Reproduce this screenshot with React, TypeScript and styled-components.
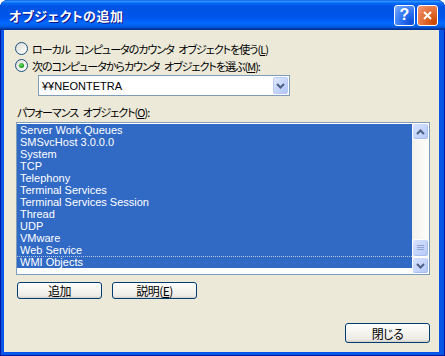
import styled, { createGlobalStyle, css } from 'styled-components';

const GlobalStyle = createGlobalStyle`
  html, body {
    margin: 0;
    padding: 0;
    background: #ffffff;
  }
  body {
    font-family: "Noto Sans CJK JP", "Liberation Sans", sans-serif;
  }
`;

// narrow Japanese UI text, close to MS UI Gothic widths
const uiText = css`
  font-size: 11px;
  letter-spacing: -1px;
  word-spacing: 3px;
  font-feature-settings: "palt";
`;

const Window = styled.div`
  width: 445px;
  height: 356px;
  box-sizing: border-box;
  display: flex;
  flex-direction: column;
  background: #0856e8;
  border-radius: 8px 8px 0 0;
  overflow: hidden;
  box-shadow: inset 1px 0 #0019a0, inset -1px 0 #0019a0, inset 0 -1px #0019a0;
`;

const TitleBar = styled.div`
  height: 30px;
  flex-shrink: 0;
  display: flex;
  align-items: center;
  gap: 2px;
  padding: 0 7px 0 9px;
  background: linear-gradient(
    to bottom,
    #0058ee 0%,
    #3593ff 4%,
    #288eff 6%,
    #127dff 8%,
    #036ffc 10%,
    #0262ee 14%,
    #0057e5 20%,
    #0054e3 24%,
    #0055eb 56%,
    #005bf5 66%,
    #026afe 76%,
    #0062ef 86%,
    #0052d6 92%,
    #0040ab 94%,
    #003092 100%
  );
`;

const Title = styled.div`
  flex: 1;
  color: #ffffff;
  font-size: 13px;
  font-weight: 700;
  font-feature-settings: "palt";
  text-shadow: 1px 1px 0 #0f1089;
  letter-spacing: 0.5px;
`;

const CaptionButton = styled.div<{ $close?: boolean }>`
  width: 21px;
  height: 21px;
  box-sizing: border-box;
  border: 1px solid #ffffff;
  border-radius: 3px;
  display: flex;
  align-items: center;
  justify-content: center;
  color: #ffffff;
  font-family: "Liberation Sans", sans-serif;
  font-size: 16px;
  font-weight: 700;
  background: ${(p) =>
    p.$close
      ? 'radial-gradient(circle at 85% 85%, #cc4600 0%, #dc6527 35%, #e87a4a 65%, #f2a07e 100%)'
      : 'radial-gradient(circle at 85% 85%, #0a4fd6 0%, #2a6ef2 40%, #4f8cf8 70%, #86b0fa 100%)'};
`;

const Body = styled.div`
  flex: 1;
  margin: 0 6px 4px 4px;
  background: #ece9d8;
  display: flex;
  flex-direction: column;
  padding: 10px 9px 9px 11px;
  font-size: 12px;
  color: #000000;
`;

const RadioRow = styled.label`
  display: flex;
  align-items: center;
  gap: 4px;
  height: 17px;
  white-space: nowrap;
  ${uiText}
`;

const Radio = styled.span<{ $checked?: boolean }>`
  width: 13px;
  height: 13px;
  box-sizing: border-box;
  border-radius: 50%;
  border: 1px solid #1c5180;
  background: linear-gradient(135deg, #dcdcd7, #ffffff);
  position: relative;
  flex-shrink: 0;
  &::after {
    content: '';
    display: ${(p) => (p.$checked ? 'block' : 'none')};
    position: absolute;
    left: 3px;
    top: 3px;
    width: 5px;
    height: 5px;
    border-radius: 50%;
    background: radial-gradient(circle at 40% 35%, #6fe06a, #21a121 60%, #198619);
  }
`;

const Combo = styled.div`
  margin: 1px 0 0 23px;
  width: 252px;
  height: 21px;
  box-sizing: border-box;
  border: 1px solid #7f9db9;
  background: #ffffff;
  display: flex;
  align-items: stretch;
  padding: 1px;
`;

const ComboText = styled.div`
  flex: 1;
  display: flex;
  align-items: center;
  padding-left: 2px;
  font-family: "Liberation Sans", "Noto Sans CJK JP", sans-serif;
  font-size: 11px;
`;

const ArrowButton = styled.div`
  width: 15px;
  box-sizing: border-box;
  border: 1px solid #b9cbf4;
  border-radius: 2px;
  background: linear-gradient(135deg, #dfe8fd, #c2d3fb 60%, #b3c7f5);
  display: flex;
  align-items: center;
  justify-content: center;
`;

const SectionLabel = styled.div`
  margin-top: 8px;
  height: 16px;
  display: flex;
  align-items: center;
  padding-left: 2px;
  ${uiText}
`;

const ListBox = styled.div`
  margin: 2px 0 0 1px;
  height: 153px;
  box-sizing: border-box;
  border: 1px solid #7f9db9;
  background: #ffffff;
  display: flex;
`;

const Items = styled.div`
  flex: 1;
  padding-top: 1px;
`;

const Item = styled.div<{ $focused?: boolean }>`
  height: 12px;
  box-sizing: border-box;
  line-height: 11px;
  padding-left: 3px;
  background: #316ac5;
  color: #ffffff;
  font-family: "Liberation Sans", sans-serif;
  font-size: 11px;
  white-space: nowrap;
  border-top: 1px dotted ${(p) => (p.$focused ? '#b8c6dc' : 'transparent')};
`;

const ScrollBar = styled.div`
  width: 17px;
  display: flex;
  flex-direction: column;
  background: linear-gradient(to right, #f3f1ec, #fefefb);
`;

const ScrollPart = styled.div<{ $h: number }>`
  height: ${(p) => p.$h}px;
  box-sizing: border-box;
  border: 1px solid #ffffff;
  border-radius: 3px;
  background: linear-gradient(135deg, #d6e1fd, #c3d3fa 60%, #b4c8f6);
  display: flex;
  align-items: center;
  justify-content: center;
  box-shadow: inset -1px -1px 0 #a9bfef;
`;

const Track = styled.div`
  flex: 1;
`;

const ButtonRow = styled.div<{ $end?: boolean }>`
  display: flex;
  gap: 10px;
  justify-content: ${(p) => (p.$end ? 'flex-end' : 'flex-start')};
  margin-top: ${(p) => (p.$end ? 'auto' : '7px')};
  padding-left: ${(p) => (p.$end ? '0' : '2px')};
`;

const Button = styled.div<{ $h: number }>`
  width: 85px;
  height: ${(p) => p.$h}px;
  box-sizing: border-box;
  border: 1px solid #003c74;
  border-radius: 3px;
  background: linear-gradient(to bottom, #ffffff 0%, #f4f3ee 50%, #ecebe6 85%, #d6d0c5 100%);
  display: flex;
  align-items: center;
  justify-content: center;
  ${uiText}
  font-size: 12px;
  letter-spacing: -0.5px;
`;

const items = [
  'Server Work Queues',
  'SMSvcHost 3.0.0.0',
  'System',
  'TCP',
  'Telephony',
  'Terminal Services',
  'Terminal Services Session',
  'Thread',
  'UDP',
  'VMware',
  'Web Service',
  'WMI Objects',
];

function Chevron({ up }: { up?: boolean }) {
  return (
    <svg width="9" height="6" viewBox="0 0 9 6">
      <path
        d={up ? 'M1 5L4.5 1.5L8 5' : 'M1 1L4.5 4.5L8 1'}
        stroke="#4d6185"
        strokeWidth="2"
        fill="none"
      />
    </svg>
  );
}

export default function App() {
  return (
    <>
      <GlobalStyle />
      <Window>
        <TitleBar>
          <Title>オブジェクトの追加</Title>
          <CaptionButton>?</CaptionButton>
          <CaptionButton $close>
            <svg width="11" height="11" viewBox="0 0 11 11">
              <path d="M2 2L9 9M9 2L2 9" stroke="#ffffff" strokeWidth="2" />
            </svg>
          </CaptionButton>
        </TitleBar>
        <Body>
          <RadioRow>
            <Radio />
            <span>
              ローカル コンピュータのカウンタ オブジェクトを使う(<u>L</u>)
            </span>
          </RadioRow>
          <RadioRow>
            <Radio $checked />
            <span>
              次のコンピュータからカウンタ オブジェクトを選ぶ(<u>M</u>):
            </span>
          </RadioRow>
          <Combo>
            <ComboText>¥¥NEONTETRA</ComboText>
            <ArrowButton>
              <Chevron />
            </ArrowButton>
          </Combo>
          <SectionLabel>
            パフォーマンス オブジェクト(<u>O</u>):
          </SectionLabel>
          <ListBox>
            <Items>
              {items.map((name, i) => (
                <Item key={name} $focused={i === items.length - 1}>
                  {name}
                </Item>
              ))}
            </Items>
            <ScrollBar>
              <ScrollPart $h={17}>
                <Chevron up />
              </ScrollPart>
              <Track />
              <ScrollPart $h={18}>
                <svg width="7" height="8" viewBox="0 0 7 8">
                  <path d="M0 1.5H7M0 3.5H7M0 5.5H7" stroke="#8ea4d6" strokeWidth="1" />
                </svg>
              </ScrollPart>
              <ScrollPart $h={17}>
                <Chevron />
              </ScrollPart>
            </ScrollBar>
          </ListBox>
          <ButtonRow>
            <Button $h={17}>追加</Button>
            <Button $h={17}>
              説明(<u>E</u>)
            </Button>
          </ButtonRow>
          <ButtonRow $end>
            <Button $h={20}>閉じる</Button>
          </ButtonRow>
        </Body>
      </Window>
    </>
  );
}
